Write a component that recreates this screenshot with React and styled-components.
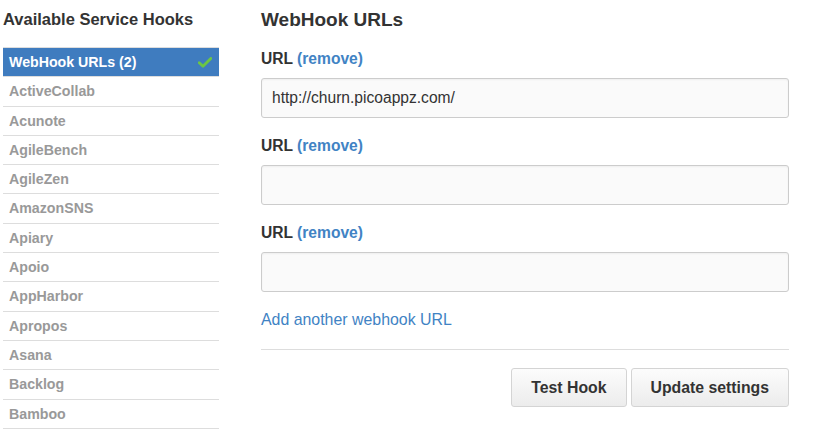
import styled, { createGlobalStyle } from "styled-components";

const GlobalStyle = createGlobalStyle`
  html, body {
    margin: 0;
    padding: 0;
    background: #fff;
  }
  body {
    font-family: "Liberation Sans", Arial, Helvetica, sans-serif;
    color: #333;
  }
`;

const Page = styled.div`
  display: flex;
  align-items: flex-start;
  gap: 42px;
  padding: 8px 0 0 3px;
`;

const Sidebar = styled.div`
  width: 216px;
  flex-shrink: 0;
`;

const SideTitle = styled.h3`
  margin: 0 0 16px;
  font-size: 16.5px;
  line-height: 23px;
  font-weight: bold;
  color: #333;
`;

const HookList = styled.ul`
  list-style: none;
  margin: 0;
  padding: 0;
  border-top: 1px solid #ddd;
`;

const HookItem = styled.li`
  display: flex;
  align-items: center;
  justify-content: space-between;
  padding: 5px 7px 5px 6px;
  line-height: 18.3px;
  font-size: 14.2px;
  font-weight: bold;
  border-bottom: 1px solid #ddd;
  color: ${(p) => (p.$active ? "#fff" : "#999")};
  background: ${(p) => (p.$active ? "#3f7cbf" : "transparent")};
`;

const Main = styled.div`
  width: 528px;
`;

const Heading = styled.h2`
  margin: 0 0 17px;
  font-size: 19px;
  line-height: 24px;
  font-weight: bold;
  color: #333;
`;

const Field = styled.div`
  margin-bottom: 18px;
`;

const Label = styled.label`
  display: block;
  font-size: 15.6px;
  line-height: 20px;
  font-weight: bold;
  color: #333;
  margin-bottom: 9px;
`;

const Remove = styled.a`
  color: #4183c4;
  text-decoration: none;
  cursor: pointer;
`;

const UrlInput = styled.input`
  display: block;
  box-sizing: border-box;
  width: 100%;
  height: 40px;
  padding: 0 10px;
  font-family: "Liberation Sans", Arial, sans-serif;
  font-size: 15.6px;
  color: #333;
  background: #fafafa;
  border: 1px solid #ccc;
  border-radius: 3px;
  box-shadow: inset 0 1px 2px rgba(0, 0, 0, 0.05);
  outline: none;
`;

const AddLink = styled.a`
  display: block;
  margin-top: 2px;
  font-size: 15.9px;
  line-height: 20px;
  color: #4183c4;
  text-decoration: none;
  cursor: pointer;
`;

const Divider = styled.hr`
  margin: 19px 0 18px;
  border: 0;
  border-top: 1px solid #ddd;
`;

const Actions = styled.div`
  display: flex;
  justify-content: flex-end;
  gap: 4px;
`;

const Button = styled.button`
  height: 39px;
  padding: 0 19px;
  font-family: "Liberation Sans", Arial, sans-serif;
  font-size: 15.8px;
  font-weight: bold;
  color: #333;
  background: linear-gradient(#fcfcfc, #ececec);
  border: 1px solid #d4d4d4;
  border-radius: 3px;
  cursor: pointer;
`;

const CheckIcon = () => (
  <svg width="14" height="11" viewBox="0 0 14 11">
    <path
      d="M1.2 5.8 L5 9.2 L12.8 1.4"
      fill="none"
      stroke="#6cc644"
      strokeWidth="2.8"
      strokeLinecap="round"
      strokeLinejoin="round"
    />
  </svg>
);

const hooks = [
  "ActiveCollab",
  "Acunote",
  "AgileBench",
  "AgileZen",
  "AmazonSNS",
  "Apiary",
  "Apoio",
  "AppHarbor",
  "Apropos",
  "Asana",
  "Backlog",
  "Bamboo",
];

const urls = ["http://churn.picoappz.com/", "", ""];

export default function App() {
  return (
    <>
      <GlobalStyle />
      <Page>
        <Sidebar>
          <SideTitle>Available Service Hooks</SideTitle>
          <HookList>
            <HookItem $active>
              <span>WebHook URLs (2)</span>
              <CheckIcon />
            </HookItem>
            {hooks.map((h) => (
              <HookItem key={h}>{h}</HookItem>
            ))}
          </HookList>
        </Sidebar>

        <Main>
          <Heading>WebHook URLs</Heading>
          {urls.map((u, i) => (
            <Field key={i}>
              <Label>
                URL <Remove>(remove)</Remove>
              </Label>
              <UrlInput type="text" defaultValue={u} />
            </Field>
          ))}
          <AddLink>Add another webhook URL</AddLink>
          <Divider />
          <Actions>
            <Button>Test Hook</Button>
            <Button>Update settings</Button>
          </Actions>
        </Main>
      </Page>
    </>
  );
}
